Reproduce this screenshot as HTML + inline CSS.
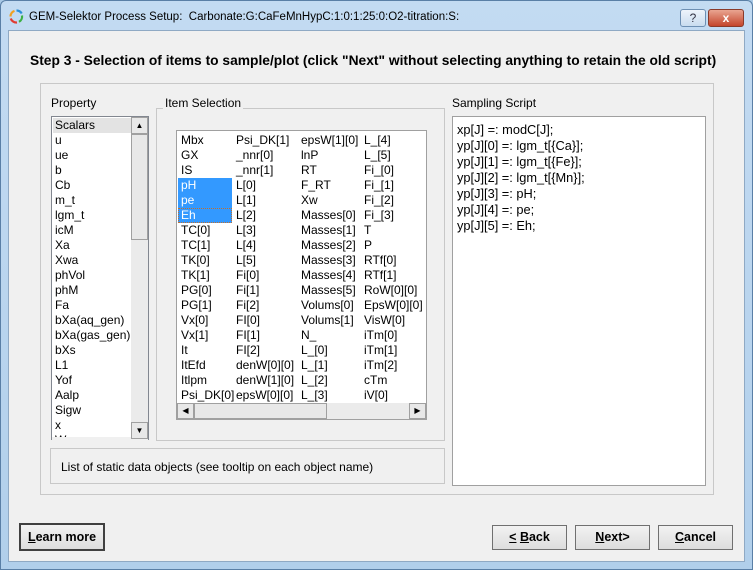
<!DOCTYPE html>
<html><head><style>
*{box-sizing:border-box;margin:0;padding:0}
body{width:753px;height:570px;position:relative;overflow:hidden;font-family:"Liberation Sans",sans-serif;font-size:12px;color:#000;background:#a9c9e6}
.a{position:absolute}
.win{left:0;top:0;width:753px;height:570px;border:1px solid #5a7fa6;border-radius:6px 6px 0 0;background:linear-gradient(#c3dbf2,#b1cfeb)}
.client{left:8px;top:30px;width:737px;height:532px;background:#f0f0f0;border:1px solid #8fa9c4}
.box{background:#fff;border:1px solid #828790}
.grp{border:1px solid #d5dfe5}
.btn{border:1px solid #707070;background:linear-gradient(#f2f2f2,#dddddd);text-align:center;line-height:22px;font-weight:bold;font-size:12.5px}
.sb{background:#e8e8e8;border:1px solid #a0a0a0}
</style></head><body>
<div class="a win"></div>
<svg class="a" style="left:9px;top:9px" width="15" height="15" viewBox="0 0 15 15"><path d="M7.5 1.5a6 6 0 0 1 5.2 3" stroke="#2a8fd6" stroke-width="2.2" fill="none"/><path d="M13 6.5a6 6 0 0 1-3 6.3" stroke="#3cb043" stroke-width="2.2" fill="none"/><path d="M8 13.5a6 6 0 0 1-6.3-4" stroke="#e03c31" stroke-width="2.2" fill="none"/><path d="M1.5 7.5a6 6 0 0 1 4-5.6" stroke="#f0a020" stroke-width="2.2" fill="none"/></svg>
<div class="a" style="left:29px;top:11px;font-size:11.5px">GEM-Selektor Process Setup:&nbsp; Carbonate:G:CaFeMnHypC:1:0:1:25:0:O2-titration:S:</div>
<div class="a" style="left:680px;top:9px;width:26px;height:18px;border:1px solid #6d8fb3;border-radius:3px;background:linear-gradient(#eef4fb,#c9dcef);text-align:center;font-size:12px;line-height:16px;color:#334">?</div>
<div class="a" style="left:708px;top:9px;width:36px;height:18px;border:1px solid #8a3a2a;border-radius:3px;background:linear-gradient(#e9a591,#c4452c);text-align:center;color:#fff;font-weight:bold;line-height:16px">x</div>
<div class="a client"></div>
<div class="a" style="left:30px;top:53px;font-weight:bold;font-size:13.8px">Step 3 - Selection of items to sample/plot (click "Next" without selecting anything to retain the old script)</div>
<div class="a grp" style="left:40px;top:83px;width:674px;height:412px;border-color:#c8c8c8"></div>
<div class="a" style="left:51px;top:96px">Property</div>
<div class="a box" style="left:51px;top:116px;width:98px;height:324px;overflow:hidden">
<div style="background:#e3e3e3;height:15px;margin:1px;width:78px"></div>
</div>
<div class="a" style="left:55px;top:118px;line-height:15px">Scalars<br>u<br>ue<br>b<br>Cb<br>m_t<br>lgm_t<br>icM<br>Xa<br>Xwa<br>phVol<br>phM<br>Fa<br>bXa(aq_gen)<br>bXa(gas_gen)<br>bXs<br>L1<br>Yof<br>Aalp<br>Sigw<br>x<br>Wx</div>
<div class="a" style="left:52px;top:437px;width:96px;height:8px;background:#f0f0f0"></div>
<div class="a" style="left:131px;top:117px;width:17px;height:322px;background:#ebebeb"></div>
<div class="a sb" style="left:131px;top:117px;width:17px;height:17px;text-align:center;font-size:8px;line-height:15px">▲</div>
<div class="a sb" style="left:131px;top:134px;width:17px;height:106px"></div>
<div class="a sb" style="left:131px;top:422px;width:17px;height:17px;text-align:center;font-size:8px;line-height:15px">▼</div>
<div class="a grp" style="left:156px;top:108px;width:289px;height:333px;border-color:#c8c8c8"></div>
<div class="a" style="left:163px;top:96px;background:#f0f0f0;padding:0 2px">Item Selection</div>
<div class="a box" style="left:176px;top:130px;width:251px;height:290px;border-color:#a0a0a0"></div>
<div class="a" style="left:178px;top:178px;width:54px;height:45px;background:#3399ff"></div>
<div class="a" style="left:178px;top:208px;width:54px;height:15px;border:1px dotted #c07030"></div>
<div class="a" style="left:181px;top:133px;line-height:15px">Mbx<br>GX<br>IS<br><span style="color:#fff">pH<br>pe<br>Eh</span><br>TC[0]<br>TC[1]<br>TK[0]<br>TK[1]<br>PG[0]<br>PG[1]<br>Vx[0]<br>Vx[1]<br>It<br>ItEfd<br>Itlpm<br>Psi_DK[0]</div>
<div class="a" style="left:236px;top:133px;line-height:15px">Psi_DK[1]<br>_nnr[0]<br>_nnr[1]<br>L[0]<br>L[1]<br>L[2]<br>L[3]<br>L[4]<br>L[5]<br>Fi[0]<br>Fi[1]<br>Fi[2]<br>FI[0]<br>FI[1]<br>FI[2]<br>denW[0][0]<br>denW[1][0]<br>epsW[0][0]</div>
<div class="a" style="left:301px;top:133px;line-height:15px">epsW[1][0]<br>lnP<br>RT<br>F_RT<br>Xw<br>Masses[0]<br>Masses[1]<br>Masses[2]<br>Masses[3]<br>Masses[4]<br>Masses[5]<br>Volums[0]<br>Volums[1]<br>N_<br>L_[0]<br>L_[1]<br>L_[2]<br>L_[3]</div>
<div class="a" style="left:364px;top:133px;line-height:15px">L_[4]<br>L_[5]<br>Fi_[0]<br>Fi_[1]<br>Fi_[2]<br>Fi_[3]<br>T<br>P<br>RTf[0]<br>RTf[1]<br>RoW[0][0]<br>EpsW[0][0]<br>VisW[0]<br>iTm[0]<br>iTm[1]<br>iTm[2]<br>cTm<br>iV[0]</div>
<div class="a" style="left:177px;top:403px;width:249px;height:16px;background:#ebebeb"></div>
<div class="a sb" style="left:177px;top:403px;width:17px;height:16px;text-align:center;font-size:8px;line-height:14px">◀</div>
<div class="a sb" style="left:194px;top:403px;width:133px;height:16px"></div>
<div class="a sb" style="left:409px;top:403px;width:17px;height:16px;text-align:center;font-size:8px;line-height:14px">▶</div>
<div class="a" style="left:50px;top:448px;width:395px;height:36px;border:1px solid #c8c8c8"></div>
<div class="a" style="left:61px;top:460px">List of static data objects (see tooltip on each object name)</div>
<div class="a" style="left:452px;top:96px">Sampling Script</div>
<div class="a box" style="left:452px;top:116px;width:254px;height:370px;border-color:#a0a0a0"></div>
<div class="a" style="left:457px;top:122px;line-height:16px;font-size:12.8px">xp[J] =: modC[J];<br>yp[J][0] =: lgm_t[{Ca}];<br>yp[J][1] =: lgm_t[{Fe}];<br>yp[J][2] =: lgm_t[{Mn}];<br>yp[J][3] =: pH;<br>yp[J][4] =: pe;<br>yp[J][5] =: Eh;</div>
<div class="a btn" style="left:19px;top:523px;width:86px;height:28px;border:2px solid #404040;line-height:24px"><u>L</u>earn more</div>
<div class="a btn" style="left:492px;top:525px;width:75px;height:25px"><u>&lt;</u> <u>B</u>ack</div>
<div class="a btn" style="left:575px;top:525px;width:75px;height:25px"><u>N</u>ext&gt;</div>
<div class="a btn" style="left:658px;top:525px;width:75px;height:25px"><u>C</u>ancel</div>
</body></html>
